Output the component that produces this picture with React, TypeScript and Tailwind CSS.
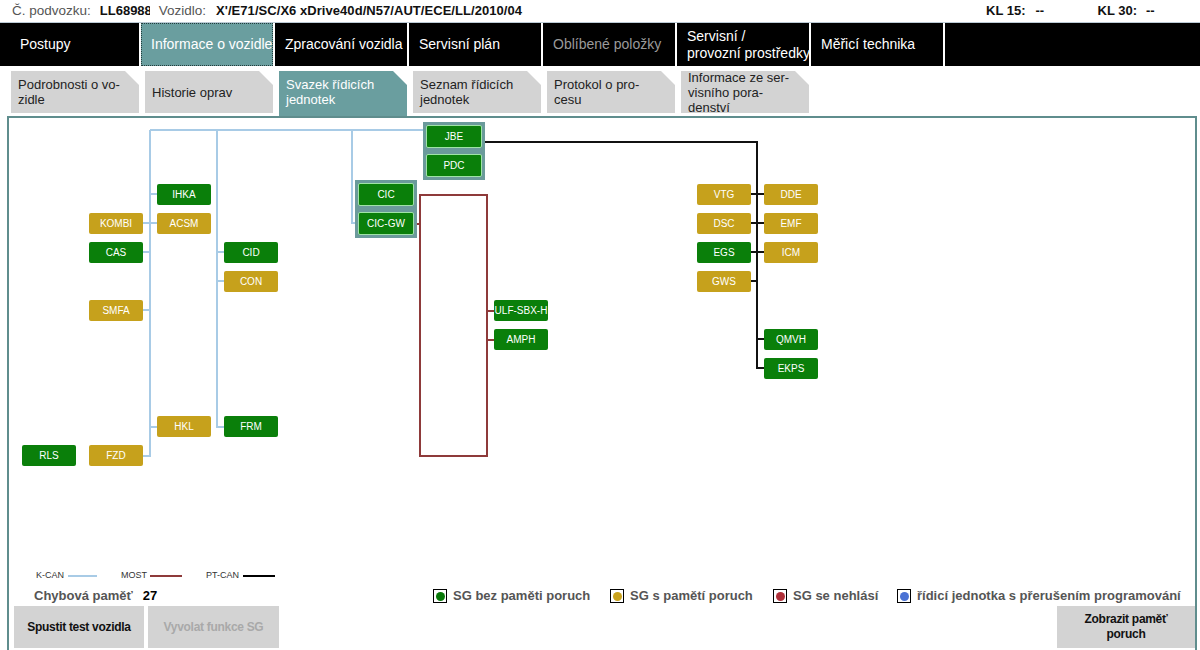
import React from "react";

type Ecu = { label: string; x: number; y: number; c: "g" | "y" };

// page coordinates of the control units (free canvas)
const nodes: Ecu[] = [
  { label: "IHKA", x: 157, y: 184, c: "g" },
  { label: "KOMBI", x: 89, y: 213, c: "y" },
  { label: "ACSM", x: 157, y: 213, c: "y" },
  { label: "CAS", x: 89, y: 242, c: "g" },
  { label: "CID", x: 224, y: 242, c: "g" },
  { label: "CON", x: 224, y: 271, c: "y" },
  { label: "SMFA", x: 89, y: 300, c: "y" },
  { label: "HKL", x: 157, y: 416, c: "y" },
  { label: "FRM", x: 224, y: 416, c: "g" },
  { label: "RLS", x: 22, y: 445, c: "g" },
  { label: "FZD", x: 89, y: 445, c: "y" },
  { label: "ULF-SBX-H", x: 494, y: 300, c: "g" },
  { label: "AMPH", x: 494, y: 329, c: "g" },
  { label: "VTG", x: 697, y: 184, c: "y" },
  { label: "DDE", x: 764, y: 184, c: "y" },
  { label: "DSC", x: 697, y: 213, c: "y" },
  { label: "EMF", x: 764, y: 213, c: "y" },
  { label: "EGS", x: 697, y: 242, c: "g" },
  { label: "ICM", x: 764, y: 242, c: "y" },
  { label: "GWS", x: 697, y: 271, c: "y" },
  { label: "QMVH", x: 764, y: 329, c: "g" },
  { label: "EKPS", x: 764, y: 358, c: "g" },
];

const groups = [
  { x: 423, y: 122, items: ["JBE", "PDC"] },
  { x: 355, y: 180, items: ["CIC", "CIC-GW"] },
];

const OX = 9;
const OY = 118;

const navItems = [
  { label: "Postupy", w: "w-[139px] pl-[20px]" },
  { label: "Informace o vozidle", w: "w-[132px]", active: true },
  { label: "Zpracování vozidla", w: "w-[132px]" },
  { label: "Servisní plán", w: "w-[132px]" },
  { label: "Oblíbené položky", w: "w-[132px]", muted: true },
  { label: "Servisní /\nprovozní prostředky", w: "w-[132px]" },
  { label: "Měřicí technika", w: "w-[132px]" },
  { label: "", w: "flex-1" },
];

const tabs = [
  ["Podrobnosti o vo-", "zidle"],
  ["Historie oprav"],
  ["Svazek řídicích", "jednotek"],
  ["Seznam řídicích", "jednotek"],
  ["Protokol o pro-", "cesu"],
  ["Informace ze ser-", "visního pora-", "denství"],
];

function Node({ label, c }: { label: string; c: "g" | "y" }) {
  return (
    <div
      className={
        c === "g"
          ? "w-[54px] h-[21px] rounded-[2px] bg-[#0a7f0a] text-white text-[10px] flex items-center justify-center whitespace-nowrap"
          : "w-[54px] h-[21px] rounded-[2px] bg-[#c6a11c] text-white text-[10px] flex items-center justify-center whitespace-nowrap"
      }
    >
      {label}
    </div>
  );
}

function Diagram() {
  const blue = "#a8cbe6";
  const red = "#8e3a3a";
  return (
    <div className="relative h-[451px]">
      <svg className="absolute inset-0" width="1186" height="451">
        <g transform={`translate(${-OX},${-OY})`} fill="none" strokeWidth="2">
          {/* K-CAN */}
          <g stroke={blue}>
            <path d="M150 130 H423" />
            <path d="M150 130 V456 H143" />
            <path d="M143 223 H157 M143 252 H150 M143 310 H150 M150 194 H157 M150 427 H157" />
            <path d="M217 130 V427 H224 M217 252 H224 M217 281 H224" />
            <path d="M352 130 V223 H355" />
          </g>
          {/* MOST */}
          <g stroke={red}>
            <path d="M420 195 H487 V456 H420 Z" />
            <path d="M417 224 H420 M487 311 H494 M487 340 H494" />
          </g>
          {/* PT-CAN */}
          <g stroke="#111">
            <path d="M485 142 H757 V368 H764" />
            <path d="M751 194 H764 M751 223 H764 M751 252 H764 M751 281 H757 M757 339 H764" />
          </g>
        </g>
      </svg>
      {nodes.map((n) => (
        <div key={n.label} className="absolute" style={{ left: n.x - OX, top: n.y - OY }}>
          <Node label={n.label} c={n.c} />
        </div>
      ))}
      {groups.map((g) => (
        <div
          key={g.items[0]}
          className="absolute bg-[#6b9a9b] p-[3px] flex flex-col gap-[6px]"
          style={{ left: g.x - OX, top: g.y - OY }}
        >
          {g.items.map((it) => (
            <div
              key={it}
              className="w-[56px] h-[23px] rounded-[2px] bg-[#0a7f0a] border border-[#9fe3a6] text-white text-[10px] flex items-center justify-center"
            >
              {it}
            </div>
          ))}
        </div>
      ))}
    </div>
  );
}

function Legend({ color, label, w }: { color: string; label: string; w: string }) {
  return (
    <div className={`flex items-center ${w}`}>
      <div className="w-[14px] h-[14px] border border-black bg-white flex items-center justify-center">
        <div className="w-[9px] h-[9px] rounded-full" style={{ backgroundColor: color }} />
      </div>
      <span className="ml-[6px] text-[13px] font-bold text-[#555] whitespace-nowrap">{label}</span>
    </div>
  );
}

export default function App() {
  return (
    <div className="w-[1200px] h-[650px] overflow-hidden bg-white font-['Liberation_Sans',Arial,sans-serif] text-[#111]">
      {/* header */}
      <div className="h-[23px] flex items-center text-[13px] border-b border-[#bccbd6]">
        <span className="ml-[12px] text-[13.5px] text-[#555]">Č. podvozku:</span>
        <span className="ml-[9px] w-[50px] overflow-hidden whitespace-nowrap font-bold">LL68988</span>
        <span className="ml-[9px] text-[13.5px] text-[#555]">Vozidlo:</span>
        <span className="ml-[10px] font-bold tracking-[0.05px]">X'/E71/SC/X6 xDrive40d/N57/AUT/ECE/LL/2010/04</span>
        <span className="ml-auto font-bold">KL 15:</span>
        <span className="ml-[10px] w-[62px] font-bold">--</span>
        <span className="font-bold">KL 30:</span>
        <span className="ml-[9px] w-[54px] font-bold">--</span>
      </div>

      {/* main nav */}
      <div className="flex gap-[2px] h-[43px]">
        {navItems.map((n, i) => (
          <div
            key={i}
            className={
              (n.active
                ? "bg-[#6a9e9f] border border-dotted border-[#243c3c] pl-[9px] "
                : "bg-black pl-[10px] ") +
              n.w +
              " shrink-0 flex items-center text-[14px] leading-[17px] whitespace-pre overflow-hidden " +
              (n.muted ? "text-[#9a9a9a]" : "text-white")
            }
          >
            {n.label}
          </div>
        ))}
      </div>

      {/* sub tabs */}
      <div className="mt-[5px] h-[45px] flex items-start gap-[6px] pl-[11px]">
        {tabs.map((t, i) => {
          const active = i === 2;
          return (
            <div
              key={i}
              className={
                "w-[128px] flex flex-col justify-center pl-[7px] text-[13px] leading-[15px] [clip-path:polygon(0_0,calc(100%-14px)_0,100%_14px,100%_100%,0_100%)] " +
                (active ? "h-[45px] pb-[3px] bg-[#6a9e9f] text-white" : "h-[42px] bg-[#d3d3d3] text-[#222]")
              }
            >
              {t.map((l) => (
                <span key={l} className="whitespace-nowrap">
                  {l}
                </span>
              ))}
            </div>
          );
        })}
      </div>

      {/* content */}
      <div className="ml-[7px] w-[1190px] h-[540px] border-2 border-[#5f8d8d] flex flex-col">
        <Diagram />

        <div className="h-[14px] flex items-center pl-[27px] text-[9px] text-[#333]">
          <span>K-CAN</span>
          <span className="ml-[4px] w-[29px] h-[2px] bg-[#a8cbe6]" />
          <span className="ml-[24px]">MOST</span>
          <span className="ml-[3px] w-[32px] h-[2px] bg-[#8e3a3a]" />
          <span className="ml-[24px]">PT-CAN</span>
          <span className="ml-[4px] w-[32px] h-[2px] bg-black" />
        </div>

        <div className="mt-[5px] h-[16px] flex items-center pl-[25px]">
          <div className="w-[399px] flex items-center text-[13px] font-bold">
            <span className="text-[#555]">Chybová paměť</span>
            <span className="ml-[10px] text-black">27</span>
          </div>
          <Legend color="#0a7a0a" label="SG bez paměti poruch" w="w-[177px]" />
          <Legend color="#c9a21c" label="SG s pamětí poruch" w="w-[163px]" />
          <Legend color="#b0303a" label="SG se nehlásí" w="w-[124px]" />
          <Legend color="#4a72d4" label="řídicí jednotka s přerušením programování" w="" />
        </div>

        <div className="mt-[2px] flex pl-[5px] gap-[4px]">
          <div className="w-[130px] h-[42px] bg-[#d3d3d3] flex items-center justify-center text-[12px] font-bold tracking-[-0.3px]">
            Spustit test vozidla
          </div>
          <div className="w-[131px] h-[42px] bg-[#d3d3d3] flex items-center justify-center text-[12px] font-bold tracking-[-0.3px] text-[#a9a9a9]">
            Vyvolat funkce SG
          </div>
          <div className="ml-auto w-[138px] h-[42px] bg-[#d3d3d3] flex items-center justify-center text-center text-[12px] leading-[15px] font-bold tracking-[-0.3px]">
            Zobrazit paměť
            <br />
            poruch
          </div>
        </div>
      </div>
    </div>
  );
}
